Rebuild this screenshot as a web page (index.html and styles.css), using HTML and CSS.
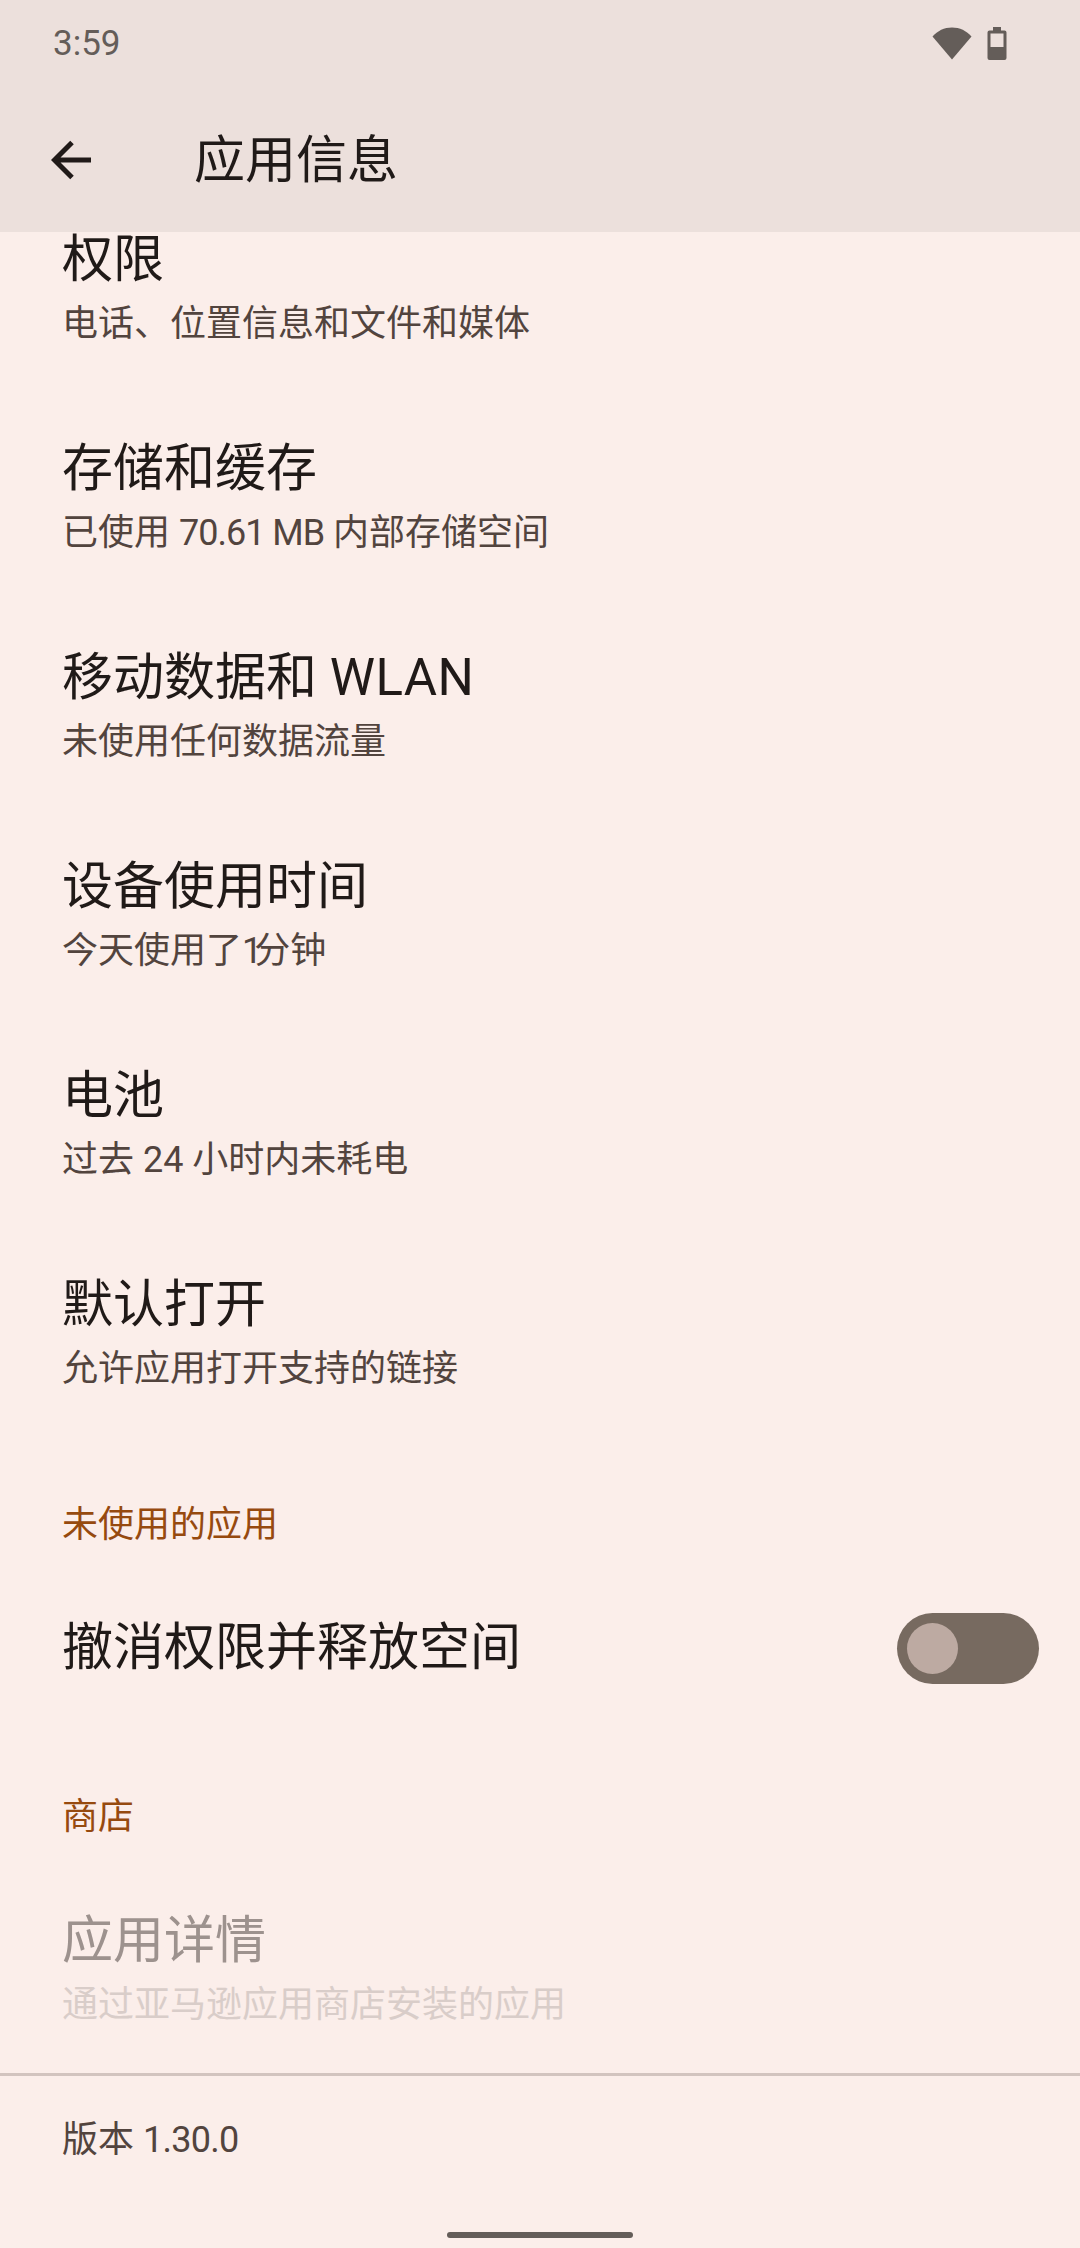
FILE: index.html
```html
<!DOCTYPE html>
<html lang="zh-CN">
<head>
  <meta charset="UTF-8" />
  <meta name="viewport" content="width=device-width, initial-scale=1.0" />
  <title>应用信息</title>
  <link rel="stylesheet" href="styles.css">
</head>
<body>

<div class="screen">
  <header class="app-header">
    <div class="status-bar">
      <span class="clock">3:59</span>
      <div class="status-icons">
        <svg class="wifi-icon" viewBox="0 0 40 33"><path d="M0.5 9.5C5.5 3.8 12.3 0.5 20 0.5s14.500 3.300 19.500 9L20 32.500z" /></svg>
        <svg class="battery-icon" viewBox="0 0 20 33">
          <path fill-rule="evenodd" d="M6 0h8v3.500h3.500a2 2 0 0 1 2 2V31a2 2 0 0 1-2 2H2.500a2 2 0 0 1-2-2V5.500a2 2 0 0 1 2-2H6zM3.500 6.500V20h13V6.500z" />
        </svg>
      </div>
    </div>
    <div class="toolbar">
      <svg class="back-icon" viewBox="0 0 42 42"><path d="M40 21H4M21 3.500L3.500 21 21 38.500" /></svg>
      <h1 class="page-title">应用信息</h1>
    </div>
  </header>

  <main class="content">
    <div class="list">
      <div class="row">
        <div class="row-title">权限</div>
        <div class="row-sub">电话、位置信息和文件和媒体</div>
      </div>
      <div class="row">
        <div class="row-title">存储和缓存</div>
        <div class="row-sub">已使用 <span class="latin-tight">70.61 MB</span> 内部存储空间</div>
      </div>
      <div class="row">
        <div class="row-title">移动数据和 <span class="latin-wide">WLAN</span></div>
        <div class="row-sub">未使用任何数据流量</div>
      </div>
      <div class="row">
        <div class="row-title">设备使用时间</div>
        <div class="row-sub">今天使用了<span class="narrow-one">1</span>分钟</div>
      </div>
      <div class="row">
        <div class="row-title">电池</div>
        <div class="row-sub">过去 24 小时内未耗电</div>
      </div>
      <div class="row">
        <div class="row-title">默认打开</div>
        <div class="row-sub">允许应用打开支持的链接</div>
      </div>
    </div>

    <div class="section-label">未使用的应用</div>
    <div class="switch-row">
      <div class="row-title">撤消权限并释放空间</div>
      <div class="switch"><div class="switch-thumb"></div></div>
    </div>

    <div class="section-label store-label">商店</div>
    <div class="row disabled">
      <div class="row-title">应用详情</div>
      <div class="row-sub">通过亚马逊应用商店安装的应用</div>
    </div>
  </main>

  <footer class="footer">
    <div class="version">版本 <span class="version-num">1.30.0</span></div>
    <div class="nav-area"><div class="home-pill"></div></div>
  </footer>
</div>

</body>
</html>
```

FILE: styles.css
```css
* {
  margin: 0;
  padding: 0;
  box-sizing: border-box;
}

body {
  width: 1080px;
  height: 2248px;
  overflow: hidden;
  background: #fbeeea;
  font-family: "Roboto", "Noto Sans CJK SC", sans-serif;
}

.screen {
  height: 2248px;
  display: flex;
  flex-direction: column;
}

/* Header */
.app-header {
  height: 232px;
  flex: none;
  background: #ece0dc;
  position: relative;
  z-index: 1;
}

.status-bar {
  height: 86px;
  padding: 0 73px 0 53px;
  display: flex;
  justify-content: space-between;
  align-items: center;
}

.clock {
  font-size: 35px;
  color: #645d59;
}

.status-icons {
  display: flex;
  align-items: center;
  gap: 15px;
}

.wifi-icon {
  width: 40px;
  height: 33px;
  fill: #645d59;
}

.battery-icon {
  width: 20px;
  height: 33px;
  fill: #645d59;
}

.toolbar {
  height: 146px;
  padding: 0 0 6px 51px;
  display: flex;
  align-items: center;
}

.back-icon {
  width: 42px;
  height: 42px;
  margin-top: 8px;
  fill: none;
  stroke: #201a18;
  stroke-width: 5;
}

.page-title {
  margin-left: 101px;
  font-size: 51px;
  font-weight: 400;
  color: #201a18;
}

/* List */
.content {
  flex: 1;
  overflow: hidden;
}

.list {
  margin-top: -50px;
}

.row {
  height: 209px;
  padding: 0 62px;
  display: flex;
  flex-direction: column;
  justify-content: center;
}

.row-title {
  font-size: 51px;
  line-height: 74px;
  color: #201a18;
}

.row-sub {
  font-size: 36px;
  line-height: 54px;
  color: #52443e;
}

.latin-tight {
  letter-spacing: -1px;
}

.latin-wide {
  letter-spacing: 0.500px;
}

.narrow-one {
  letter-spacing: -8px;
}

.version-num {
  letter-spacing: -0.700px;
}

.section-label {
  padding: 0 62px;
  margin-top: 63px;
  font-size: 36px;
  line-height: 52px;
  color: #964a0f;
}

.store-label {
  margin-top: 46px;
}

.switch-row {
  height: 194px;
  padding: 0 41px 0 62px;
  display: flex;
  justify-content: space-between;
  align-items: center;
}

.switch {
  width: 142px;
  height: 71px;
  padding: 10px;
  border-radius: 36px;
  background: #776a60;
}

.switch-thumb {
  width: 51px;
  height: 51px;
  border-radius: 50%;
  background: #bdaaa2;
}

.disabled {
  margin-top: 20px;
}

.disabled .row-title {
  color: #9d928e;
}

.disabled .row-sub {
  color: #d9cdc9;
}

/* Footer */
.footer {
  height: 175px;
  flex: none;
  border-top: 3px solid #d2c4bf;
}

.version {
  padding: 38px 62px 0;
  font-size: 36px;
  line-height: 52px;
  color: #52443e;
}

.nav-area {
  margin-top: 66px;
  display: flex;
  justify-content: center;
}

.home-pill {
  width: 186px;
  height: 6px;
  border-radius: 3px;
  background: #645d59;
}
```
